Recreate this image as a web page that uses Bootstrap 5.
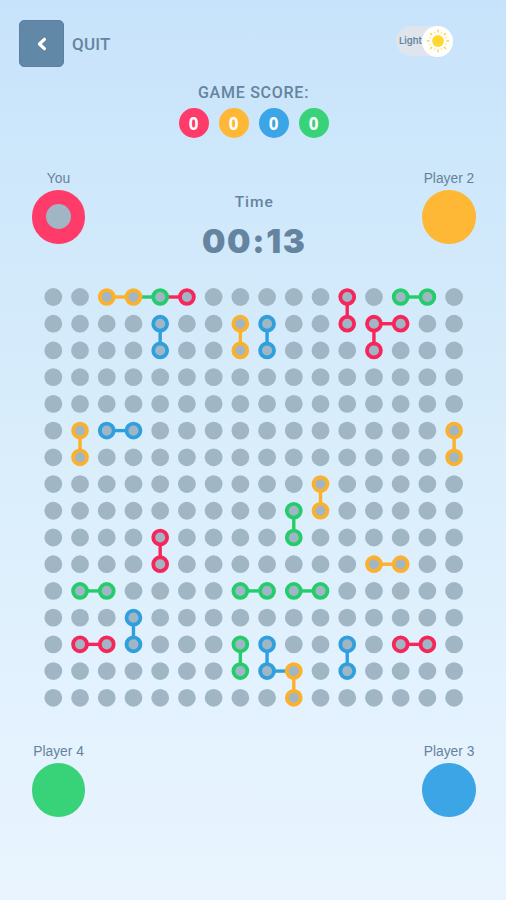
<!DOCTYPE html>
<html lang="en">
<head>
<meta charset="utf-8">
<meta name="viewport" content="width=device-width, initial-scale=1">
<title>Dots Game</title>
<link href="https://cdn.jsdelivr.net/npm/bootstrap@5.3.0/dist/css/bootstrap.min.css" rel="stylesheet">
<style>
  body { font-family: Roboto, "Liberation Sans", sans-serif; color: #64849f; background: #c8e4fc; }
  .game { width: 506px; height: 900px; background: linear-gradient(#c7e3fb 0, #cfe8fb 22%, #d9edfb 48%, #e2f2fe 76%, #e9f4fe 100%); }
  .top-bar { height: 68px; padding: 20px 53px 0 19px; }
  .btn-back { width: 45px; height: 47px; border-radius: 5px; background: #6288a7; border: 1px solid #5c819f; }
  .quit-label { font-size: 17px; font-weight: 500; letter-spacing: .2px; line-height: 20px; margin-left: 8px; }
  .theme-switch { width: 57px; height: 30px; border-radius: 15px; background: #dfe5ed; margin-top: 6px; padding-left: 3px; font: 600 9.5px/30px Inter, sans-serif; }
  .sun-knob { width: 31px; height: 31px; background: #fffefc; }
  .score { height: 102px; padding-top: 15px; }
  .score-title { font-size: 16px; font-weight: 500; line-height: 20px; letter-spacing: .75px; padding-left: 1px; }
  .score-dots { gap: 10px; margin-top: 5px; padding-left: 1px; }
  .score-dot { width: 30px; height: 30px; font: 700 17px/31px "Open Sans", sans-serif; }
  .players { padding: 1px 30px 0 31.5px; }
  .player { width: 54px; font: 13.8px/16px "Liberation Sans", sans-serif; color: #66829b; }
  .player-disc { width: 53.5px; height: 53.5px; margin-top: 3px; }
  .player-core { width: 25px; height: 25px; background: #a1b6c5; }
  .timer { padding-top: 21px; }
  .timer-label { font: 500 15.5px/20px Roboto, sans-serif; letter-spacing: 1px; padding-left: 1px; }
  .timer-value { font: 900 33px/38px Inter, sans-serif; letter-spacing: 1.7px; margin-top: 10px; padding-left: 1px; }
  .upper { height: 112px; }
  .board { height: 461px; }
  .bg-red { background: #ff3b69; } .bg-orange { background: #ffb836; }
  .bg-blue { background: #3ba5e5; } .bg-green { background: #38d379; }
</style>
<script src="https://cdn.jsdelivr.net/npm/bootstrap@5.3.0/dist/js/bootstrap.bundle.min.js"></script>
</head>
<body>
<main class="game overflow-hidden">
  <header class="top-bar d-flex justify-content-between align-items-start">
    <div class="d-flex align-items-center">
      <button class="btn btn-back p-0 d-flex align-items-center justify-content-center" aria-label="Back">
        <svg width="12" height="16" viewBox="0 0 12 16" fill="none" stroke="#fff" stroke-width="3.2" stroke-linecap="round" stroke-linejoin="round"><path d="M8.4 3.3 3.4 8l5 4.7"/></svg>
      </button>
      <span class="quit-label">QUIT</span>
    </div>
    <div class="theme-switch d-flex align-items-center justify-content-between">
      <span>Light</span>
      <span class="sun-knob rounded-circle d-flex align-items-center justify-content-center flex-shrink-0">
        <svg width="24" height="24" viewBox="-12 -12 24 24"><circle r="5.9" fill="#ffd833"/><g stroke="#ffd34a" stroke-width="1.5" stroke-linecap="round"><path d="M0-10.7V-9M0 9v1.7M-10.7 0H-9M9 0h1.7M-7.5-7.5l1.2 1.2M6.3 6.3l1.2 1.2M7.5-7.5 6.3-6.3M-6.3 6.3l-1.2 1.2"/><path stroke-width="1" d="M-3.4-8.2l.2.5M3.4-8.2l-.2.5M-3.4 8.2l.2-.5M3.4 8.2l-.2-.5M-8.2-3.4l.5.2M8.2-3.4l-.5.2M-8.2 3.4l.5-.2M8.2 3.4l-.5-.2"/></g></svg>
      </span>
    </div>
  </header>

  <section class="score d-flex flex-column align-items-center">
    <div class="score-title">GAME SCORE:</div>
    <div class="score-dots d-flex text-white text-center">
      <span class="score-dot rounded-circle bg-red">0</span>
      <span class="score-dot rounded-circle bg-orange">0</span>
      <span class="score-dot rounded-circle bg-blue">0</span>
      <span class="score-dot rounded-circle bg-green">0</span>
    </div>
  </section>

  <section class="players upper d-flex justify-content-between align-items-start text-nowrap">
    <div class="player d-flex flex-column align-items-center">
      <span>You</span>
      <span class="player-disc rounded-circle bg-red d-flex align-items-center justify-content-center"><i class="player-core rounded-circle"></i></span>
    </div>
    <div class="timer text-center">
      <div class="timer-label">Time</div>
      <div class="timer-value">00:13</div>
    </div>
    <div class="player d-flex flex-column align-items-center">
      <span>Player 2</span>
      <span class="player-disc rounded-circle bg-orange"></span>
    </div>
  </section>

  <section class="board">
    <svg id="board" class="d-block" width="506" height="440" viewBox="0 282 506 440"></svg>
  </section>

  <section class="players d-flex justify-content-between text-nowrap">
    <div class="player d-flex flex-column align-items-center">
      <span>Player 4</span>
      <span class="player-disc rounded-circle bg-green"></span>
    </div>
    <div class="player d-flex flex-column align-items-center">
      <span>Player 3</span>
      <span class="player-disc rounded-circle bg-blue"></span>
    </div>
  </section>
</main>
<script>
  const colors = { r: '#f6265b', o: '#fbb12b', b: '#2f9fde', g: '#25cc6c' };
  // Each move: column, row, direction (h or v), colour
  const moves = [
    [2,0,'h','o'],[4,0,'h','r'],[3,0,'h','g'],[11,0,'v','r'],[13,0,'h','g'],
    [4,1,'v','b'],[7,1,'v','o'],[8,1,'v','b'],[12,1,'v','r'],[12,1,'h','r'],
    [1,5,'v','o'],[2,5,'h','b'],[15,5,'v','o'],[10,7,'v','o'],[9,8,'v','g'],
    [4,9,'v','r'],[12,10,'h','o'],[1,11,'h','g'],[7,11,'h','g'],[9,11,'h','g'],
    [3,12,'v','b'],[1,13,'h','r'],[7,13,'v','g'],[8,13,'v','b'],[11,13,'v','b'],
    [13,13,'h','r'],[8,14,'h','b'],[9,14,'v','o']
  ];
  const px = c => (53.3 + c * 26.72).toFixed(2), py = r => (297 + r * 26.72).toFixed(2);
  const owner = { '3,0': 'o' };
  let svg = '';
  for (const [c, r, d, k] of moves) {
    const c2 = d === 'h' ? c + 1 : c, r2 = d === 'v' ? r + 1 : r;
    svg += `<line x1="${px(c)}" y1="${py(r)}" x2="${px(c2)}" y2="${py(r2)}" stroke="${colors[k]}" stroke-width="3.4"/>`;
    if (!(c === 3 && r === 0)) owner[c + ',' + r] = k;
    owner[c2 + ',' + r2] = k;
  }
  for (let r = 0; r < 16; r++) for (let c = 0; c < 16; c++) {
    const k = owner[c + ',' + r];
    svg += k
      ? `<circle cx="${px(c)}" cy="${py(r)}" r="6.95" fill="#a1b6c5" stroke="${colors[k]}" stroke-width="3.8"/>`
      : `<circle cx="${px(c)}" cy="${py(r)}" r="8.9" fill="#a1b6c5"/>`;
  }
  document.getElementById('board').innerHTML = svg;
</script>
</body>
</html>
